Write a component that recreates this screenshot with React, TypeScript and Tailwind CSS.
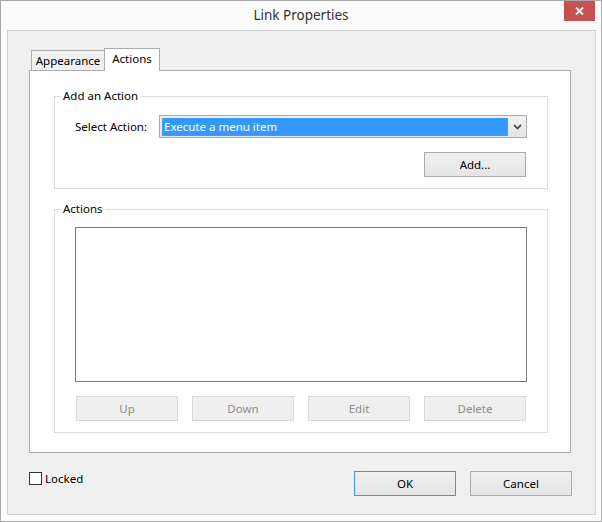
import type { ReactNode } from "react";

function PushButton({
  children,
  disabled,
  isDefault,
}: {
  children: ReactNode;
  disabled?: boolean;
  isDefault?: boolean;
}) {
  if (disabled) {
    return (
      <button
        disabled
        className="flex h-[25px] w-[102px] items-center justify-center border border-[#d9d9d9] bg-[#efefef] text-[#8c8c8c]"
      >
        {children}
      </button>
    );
  }
  return (
    <button
      className={
        isDefault
          ? "flex h-[25px] w-[102px] items-center justify-center border border-[#3399ff] bg-linear-to-b from-[#f0f0f0] to-[#e5e5e5] text-black"
          : "flex h-[25px] w-[102px] items-center justify-center border border-[#acacac] bg-linear-to-b from-[#f0f0f0] to-[#e5e5e5] text-black"
      }
    >
      {children}
    </button>
  );
}

function GroupBox({ title, children, className }: { title: string; children: ReactNode; className?: string }) {
  return (
    <fieldset className={`border border-[#dcdcdc] ${className ?? ""}`}>
      <legend className="ml-[6px] px-[2px] leading-[16px] text-black">{title}</legend>
      {children}
    </fieldset>
  );
}

export default function App() {
  return (
    <div className="flex h-[522px] w-[602px] flex-col border border-[#a9a9a9] bg-[#fcfcfc] font-['Noto_Sans',sans-serif] text-[11.5px] text-black">
      {/* title bar */}
      <div className="relative flex h-[29px] shrink-0 items-center justify-center">
        <span className="text-[13.5px] text-[#333333]">Link Properties</span>
        <button className="absolute right-[6px] top-0 flex h-[20px] w-[31px] items-center justify-center bg-[#c75050]">
          <svg width="9" height="8" viewBox="0 0 9 8">
            <path d="M1 0.5 L8 7.5 M8 0.5 L1 7.5" stroke="#ffffff" strokeWidth="1.8" />
          </svg>
        </button>
      </div>

      <div className="ml-[6px] mr-[5px] flex h-[485px] shrink-0 flex-col border border-[#d0d0d0] bg-[#f0f0f0] pl-[21px] pt-[17px]">
        {/* tabs */}
        <div className="flex h-[22px] items-end pl-[2px]">
          <div className="flex h-[20px] w-[73px] items-center justify-center border-l border-t border-[#acacac] bg-[#f0f0f0] pt-[1px]">
            Appearance
          </div>
          <div className="relative z-10 -mb-px flex h-[23px] w-[56px] items-center justify-center border-x border-t border-[#acacac] bg-white pb-[2px]">
            Actions
          </div>
        </div>

        <div className="flex h-[383px] w-[542px] flex-col border border-[#acacac] bg-white pl-[24px]">
          <GroupBox title="Add an Action" className="mt-[17px] w-[494px] pb-[11px]">
            <div className="mt-[11px] flex items-center pl-[20px] pr-[20px]">
              <span className="w-[84px]">Select Action:</span>
              <div className="flex h-[23px] flex-1 items-center border border-[#acacac] bg-linear-to-b from-[#f2f2f2] to-[#e5e5e5] pl-[2px]">
                <div className="flex h-[18px] flex-1 items-center border border-dotted border-[#d8793a] bg-[#3399ff] pl-[1px] text-white">
                  Execute a menu item
                </div>
                <div className="flex w-[18px] items-center justify-center">
                  <svg width="9" height="6" viewBox="0 0 9 6">
                    <path d="M1 1 L4.5 4.5 L8 1" fill="none" stroke="#505050" strokeWidth="1.8" />
                  </svg>
                </div>
              </div>
            </div>
            <div className="mt-[14px] flex justify-end pr-[21px]">
              <PushButton>Add...</PushButton>
            </div>
          </GroupBox>

          <GroupBox title="Actions" className="mt-[12px] w-[494px] pb-[11px]">
            <div className="ml-[20px] mt-[10px] h-[155px] w-[452px] border border-[#7a7a7a] bg-white" />
            <div className="mt-[14px] flex gap-[14px] pl-[21px]">
              <PushButton disabled>Up</PushButton>
              <PushButton disabled>Down</PushButton>
              <PushButton disabled>Edit</PushButton>
              <PushButton disabled>Delete</PushButton>
            </div>
          </GroupBox>
        </div>

        {/* bottom row */}
        <div className="mt-[18px] flex w-[543px] items-start justify-between">
          <label className="mt-[1px] flex items-center gap-[3px]">
            <span className="h-[13px] w-[13px] border border-[#333333] bg-white" />
            <span className="leading-[13px]">Locked</span>
          </label>
          <div className="flex gap-[14px]">
            <PushButton isDefault>OK</PushButton>
            <PushButton>Cancel</PushButton>
          </div>
        </div>
      </div>
    </div>
  );
}
